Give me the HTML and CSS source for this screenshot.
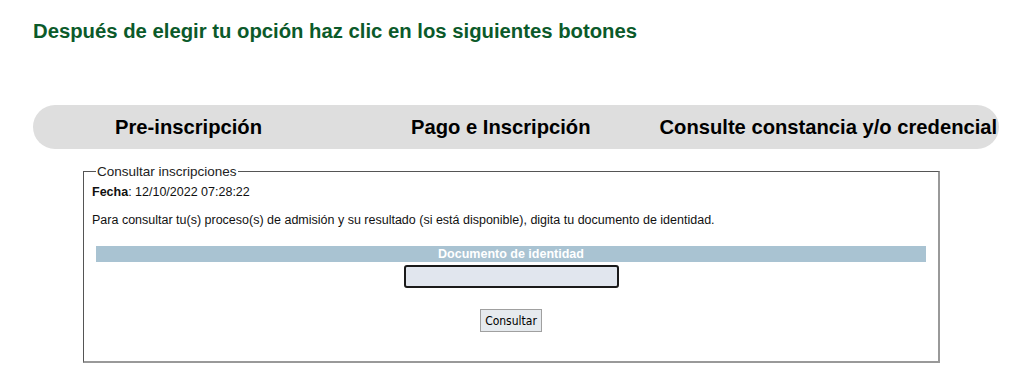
FILE: index.html
```html
<!DOCTYPE html>
<html lang="es">
<head>
    <meta charset="UTF-8">
    <title>Consultar inscripciones</title>
    <link rel="stylesheet" href="styles.css">
</head>
<body>
    <h2 class="intro">Después de elegir tu opción haz clic en los siguientes botones</h2>

    <div class="menu">
        <a class="menu-item item-pre" href="#">Pre-inscripción</a>
        <a class="menu-item item-pago" href="#">Pago e Inscripción</a>
        <a class="menu-item item-cons" href="#">Consulte constancia y/o credencial</a>
    </div>

    <fieldset class="consulta">
        <legend>Consultar inscripciones</legend>
        <p class="fecha"><b>Fecha</b>: 12/10/2022 07:28:22</p>
        <p class="ayuda">Para consultar tu(s) proceso(s) de admisión y su resultado (si está disponible), digita tu documento de identidad.</p>
        <div class="doc-head">Documento de identidad</div>
        <div class="doc-row">
            <input class="doc-input" type="text">
        </div>
        <div class="btn-row">
            <button class="btn-consultar">Consultar</button>
        </div>
    </fieldset>
</body>
</html>
```

FILE: styles.css
```css
body {
    margin: 0;
    padding: 0;
    font-family: "Liberation Sans", Arial, sans-serif;
    background: #ffffff;
    color: #000000;
}
.intro {
    margin: 0;
    padding: 20px 0 0 33px;
    font-size: 20.3px;
    font-weight: bold;
    color: #0b5a2a;
    line-height: 23px;
}
.menu {
    display: flex;
    align-items: center;
    margin: 62px 0 0 33px;
    width: 966px;
    height: 44px;
    background: #dedede;
    border-radius: 22px;
}
.menu-item {
    font-size: 20.2px;
    font-weight: bold;
    color: #000000;
    text-decoration: none;
    white-space: nowrap;
}
.item-pre { margin-left: 82px; }
.item-pago { margin-left: 149px; }
.item-cons { margin-left: 69px; }
.consulta {
    margin: 15px 0 0 83px;
    width: 830px;
    height: 196px;
    padding: 0 12px;
    border-top: 1px solid #555;
    border-left: 1px solid #555;
    border-right: 2px solid #999;
    border-bottom: 2px solid #999;
    font-size: 12.5px;
    color: #111;
}
.consulta legend {
    padding: 0 1px;
    font-size: 13.5px;
    color: #222;
}
.fecha {
    margin: 6px 0 0 -4px;
}
.ayuda {
    margin: 14px 0 0 -4px;
}
.doc-head {
    margin-top: 19px;
    height: 16px;
    line-height: 16px;
    background: #a9c3d2;
    color: #ffffff;
    font-weight: bold;
    text-align: center;
}
.doc-row {
    display: flex;
    justify-content: center;
    margin-top: 3px;
}
.doc-input {
    width: 215px;
    height: 23px;
    box-sizing: border-box;
    background: #e1e6ee;
    border: 2px solid #1a1a1a;
    border-radius: 3px;
}
.btn-row {
    display: flex;
    justify-content: center;
    margin-top: 21px;
}
.btn-consultar {
    height: 23px;
    padding: 0 4px;
    font-family: "DejaVu Sans Condensed", Tahoma, sans-serif;
    font-size: 12px;
    background: #e6eaee;
    border: 1px solid #a0a0a0;
    color: #000;
}
```
